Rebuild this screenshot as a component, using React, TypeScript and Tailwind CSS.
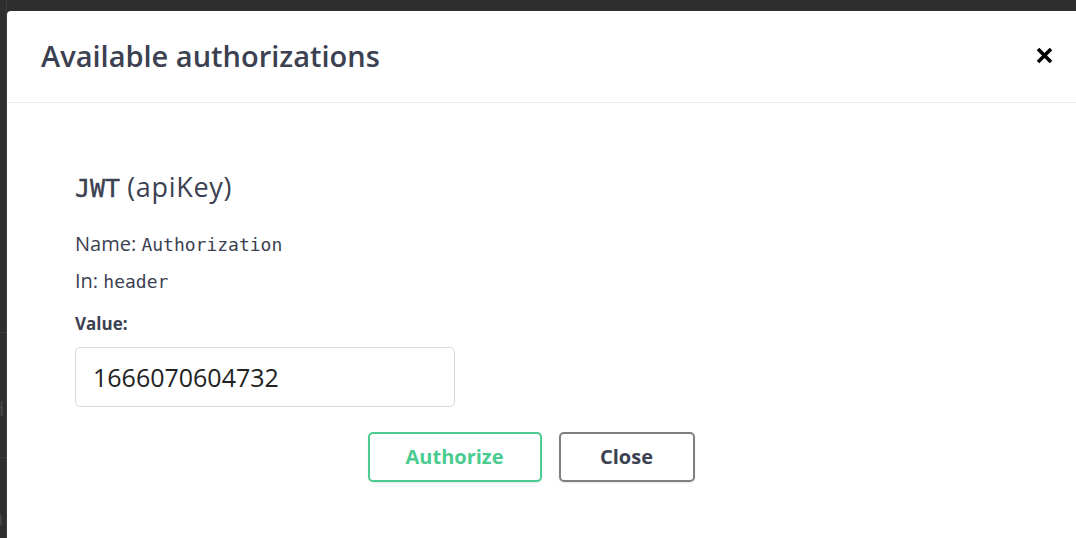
const SANS = "[font-family:'Open_Sans',sans-serif]";
const MONO = "[font-family:'DejaVu_Sans_Mono',monospace]";

export default function App() {
  return (
    <div className="flex h-[538px] w-[1076px] overflow-hidden bg-[#2e2e2e]">
      {/* page behind the overlay */}
      <div className="flex w-[7px] flex-none flex-col overflow-hidden border-r border-[#3c3c3c] text-[#484848]">
        <div className="h-[333px] border-b border-[#3a3a3a]" />
        <div className="flex h-[125px] items-center border-b border-[#3a3a3a] pt-[28px] text-[20px] leading-none [font-family:'Open_Sans',sans-serif]">
          <span className="-ml-[8px]">d</span>
        </div>
        <div className="pt-[50px] text-[20px] leading-none [font-family:'Open_Sans',sans-serif]">
          <span className="-ml-[9px]">n</span>
        </div>
      </div>

      <div className="flex flex-col pt-[11px]">
        <div className={`w-[1080px] flex-1 rounded-t-[4px] bg-white text-[#3b4151] ${SANS}`}>
          <div className="flex h-[92px] items-center justify-between border-b border-[#ebebeb] pl-[34px] pr-[34px]">
            <h3 className="pb-[2px] text-[29px] font-semibold leading-none">
              Available authorizations
            </h3>
            <button className="mb-[2px] text-black">
              <svg width="17" height="17" viewBox="0 0 17 17" fill="none" stroke="currentColor" strokeWidth="3.6">
                <path d="M2 2L15 15M15 2L2 15" />
              </svg>
            </button>
          </div>

          <div className="w-[1048px] pt-[70px]">
            <div className="pl-[68px]">
              <h4 className="text-[27px] font-medium leading-none">
                <code className={`${MONO} text-[25px] font-normal [-webkit-text-stroke:0.4px_#3b4151]`}>JWT</code>{" "}
                <span className="tracking-[0.7px]">(apiKey)</span>
              </h4>
              <p className="mt-[33px] text-[20px] leading-none">
                Name: <code className={`${MONO} text-[18px]`}>Authorization</code>
              </p>
              <p className="mt-[17px] text-[20px] leading-none">
                In: <code className={`${MONO} text-[18px]`}>header</code>
              </p>
              <label className="mt-[24px] block text-[17px] font-bold leading-none">Value:</label>
              <input
                readOnly
                value="1666070604732"
                className="mt-[15px] h-[60px] w-[380px] rounded-[5px] border border-[#d9d9d9] px-[17px] text-[25px] text-[#222] outline-none [font-family:'Open_Sans',sans-serif]"
              />
            </div>
            <div className="mt-[25px] flex justify-center gap-[17px]">
              <button className="h-[50px] w-[174px] rounded-[5px] border-2 border-[#49cc90] text-[20px] font-bold text-[#49cc90] shadow-[0_1px_2px_rgba(0,0,0,0.1)]">
                Authorize
              </button>
              <button className="h-[50px] w-[136px] rounded-[5px] border-2 border-[#808080] text-[20px] font-bold text-[#3b4151] shadow-[0_1px_2px_rgba(0,0,0,0.1)]">
                Close
              </button>
            </div>
          </div>
        </div>
      </div>
    </div>
  );
}
